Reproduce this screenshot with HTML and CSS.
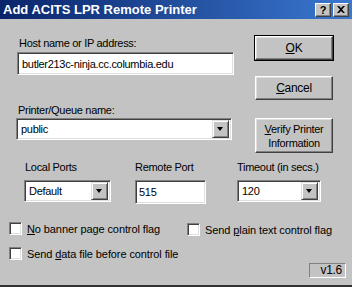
FILE: index.html
```html
<!DOCTYPE html>
<html lang="en">
<head>
    <meta charset="UTF-8">
    <title>Add ACITS LPR Remote Printer</title>
    <link rel="stylesheet" href="styles.css">
</head>
<body>
<div class="window">
    <div class="titlebar">
        <span class="title">Add ACITS LPR Remote Printer</span>
        <span class="tbtn help">?</span>
        <span class="tbtn close">
            <svg width="8" height="7" viewBox="0 0 8 7"><path d="M0 0h2l2 2 2-2h2L5 3.5 8 7H6L4 5 2 7H0l3-3.5z" fill="#000"/></svg>
        </span>
    </div>

    <div class="top">
        <div class="fields">
            <div class="label host-label">Host name or IP address:</div>
            <div class="field host">butler213c-ninja.cc.columbia.edu</div>
            <div class="label queue-label">Printer/Queue name:</div>
            <div class="field combo queue"><span class="val">public</span><span class="arrow"></span></div>
        </div>
        <div class="buttons">
            <div class="btn default"><span><u>O</u>K</span></div>
            <div class="btn cancel"><span><u>C</u>ancel</span></div>
            <div class="btn verify"><span><u>V</u>erify Printer<br>Information</span></div>
        </div>
    </div>

    <div class="ports">
        <div class="port local">
            <div class="label">Local Ports</div>
            <div class="field combo"><span class="val">Default</span><span class="arrow"></span></div>
        </div>
        <div class="port remote">
            <div class="label">Remote Port</div>
            <div class="field text">515</div>
        </div>
        <div class="port timeout">
            <div class="label">Timeout (in secs.)</div>
            <div class="field combo"><span class="val">120</span><span class="arrow"></span></div>
        </div>
    </div>

    <div class="checks">
        <div class="check-row first">
            <label class="check"><span class="box"></span><span><u>N</u>o banner page control flag</span></label>
            <label class="check plain"><span class="box"></span><span>Send <u>p</u>lain text control flag</span></label>
        </div>
        <div class="check-row second">
            <label class="check"><span class="box"></span><span>Send <u>d</u>ata file before control file</span></label>
        </div>
    </div>

    <div class="footer">
        <span class="version">v1.6</span>
    </div>
</div>
</body>
</html>
```
FILE: styles.css
```css
body {
    margin: 0;
    background-color: #c0c0c0;
    font-family: "Liberation Sans", Arial, sans-serif;
    font-size: 11px;
    letter-spacing: -0.3px;
    color: black;
}
.window {
    width: 352px;
    height: 287px;
    overflow: hidden;
    background-color: #c3c3c3;
    border-bottom: 2px solid #303030;
    box-sizing: border-box;
}
.titlebar {
    height: 19px;
    background: linear-gradient(to right, #0a246a, #3a78d0);
    display: flex;
    align-items: center;
    padding: 0 3px 0 3px;
}
.title {
    color: white;
    font-weight: bold;
    font-size: 13px;
    flex: 1;
    letter-spacing: 0;
}
.tbtn {
    width: 16px;
    height: 14px;
    box-sizing: border-box;
    background: #c3c3c3;
    border: 1px solid;
    border-color: #fff #404040 #404040 #fff;
    box-shadow: inset -1px -1px #808080;
    display: flex;
    align-items: center;
    justify-content: center;
    font-weight: bold;
    font-size: 11px;
}
.help {
    margin-right: 2px;
}

/* top block: host + queue on the left, buttons on the right */
.top {
    display: flex;
}
.fields {
    width: 217px;
    padding-left: 17px;
}
.label {
    height: 13px;
    line-height: 13px;
    white-space: nowrap;
}
.host-label {
    margin: 18px 0 0 2px;
}
.field {
    box-sizing: border-box;
    background: white;
    border: 1px solid;
    border-color: #808080 #fff #fff #808080;
    box-shadow: inset 1px 1px #404040, inset -1px -1px #dfdfdf;
    display: flex;
    align-items: center;
    padding-left: 4px;
}
.host {
    margin-top: 2px;
    height: 23px;
}
.queue-label {
    margin: 29px 0 0 1px;
}
.queue {
    margin-top: 1px;
    height: 22px;
    width: 216px;
    margin-left: -1px;
}
.combo .val {
    flex: 1;
}
.arrow {
    width: 17px;
    height: 18px;
    box-sizing: border-box;
    margin-right: 2px;
    background: #c3c3c3;
    border: 1px solid;
    border-color: #dfdfdf #404040 #404040 #dfdfdf;
    box-shadow: inset 1px 1px #fff, inset -1px -1px #808080;
    position: relative;
}
.arrow::after {
    content: "";
    position: absolute;
    left: 4px;
    top: 6px;
    border-left: 3.5px solid transparent;
    border-right: 3.5px solid transparent;
    border-top: 4px solid black;
}
.buttons {
    margin-left: 21px;
    display: flex;
    flex-direction: column;
    padding-top: 17px;
}
.btn {
    width: 78px;
    height: 24px;
    box-sizing: border-box;
    background: #c3c3c3;
    border: 1px solid;
    border-color: #fff #404040 #404040 #fff;
    box-shadow: inset -1px -1px #808080, inset 1px 1px #dfdfdf;
    display: flex;
    align-items: center;
    justify-content: center;
    text-align: center;
    font-size: 12px;
}
.default {
    outline: 1px solid black;
}
.cancel {
    margin-top: 16px;
}
.verify {
    margin-top: 18px;
    height: 35px;
    line-height: 14px;
    font-size: 11px;
}

/* port row */
.ports {
    display: flex;
    margin-top: 8px;
}
.port .label {
    margin-bottom: 6px;
}
.local {
    margin-left: 24px;
    width: 87px;
}
.local .label {
    margin-left: 1px;
}
.remote {
    margin-left: 24px;
    width: 71px;
}
.remote .field {
    height: 24px;
    padding-left: 3px;
}
.timeout {
    margin-left: 31px;
    width: 84px;
}
.port .combo {
    height: 22px;
}

/* checkboxes */
.checks {
    padding-left: 9px;
    letter-spacing: -0.1px;
}
.check-row {
    display: flex;
}
.first {
    margin-top: 17px;
}
.second {
    margin-top: 11px;
}
.check {
    display: flex;
    align-items: center;
}
.box {
    width: 13px;
    height: 13px;
    box-sizing: border-box;
    background: white;
    border: 1px solid;
    border-color: #808080 #fff #fff #808080;
    box-shadow: inset 1px 1px #404040, inset -1px -1px #dfdfdf;
    margin-right: 5px;
}
.plain {
    margin-left: 27px;
    margin-top: 2px;
}
.footer {
    display: flex;
    justify-content: flex-end;
    padding-right: 6px;
    margin-top: 3px;
}
.version {
    width: 37px;
    height: 15px;
    box-sizing: border-box;
    border: 1px solid;
    border-color: #808080 #fff #fff #808080;
    font-size: 12px;
    text-align: right;
    padding-right: 3px;
    line-height: 13px;
}
```
